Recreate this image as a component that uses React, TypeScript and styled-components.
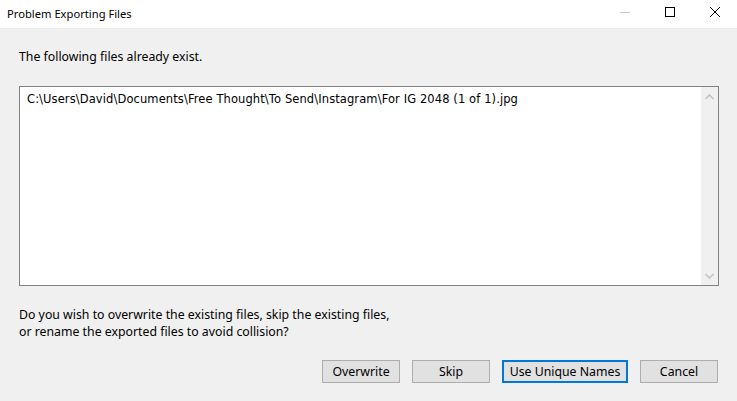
import styled, { createGlobalStyle } from 'styled-components';

const GlobalStyle = createGlobalStyle`
  html, body {
    margin: 0;
    padding: 0;
    background: #f0f0f0;
  }
  body {
    font-family: 'Noto Sans', 'Open Sans', sans-serif;
    font-size: 12.3px;
    color: #000;
  }
`;

const files = [
  'C:\\Users\\David\\Documents\\Free Thought\\To Send\\Instagram\\For IG 2048 (1 of 1).jpg',
];

const App = () => (
  <>
    <GlobalStyle />
    <Window>
      <TitleBar>
        <Title>Problem Exporting Files</Title>
        <Controls>
          <Control aria-label="Minimize">
            <svg width="10" height="10" viewBox="0 0 10 10">
              <path d="M0 5.5h10" stroke="#c8c8c8" strokeWidth="1" />
            </svg>
          </Control>
          <Control aria-label="Maximize">
            <svg width="10" height="10" viewBox="0 0 10 10">
              <rect x="0.5" y="0.5" width="9" height="9" fill="none" stroke="#000" />
            </svg>
          </Control>
          <Control aria-label="Close">
            <svg width="10" height="10" viewBox="0 0 10 10">
              <path d="M0 0L10 10M10 0L0 10" stroke="#000" strokeWidth="1" />
            </svg>
          </Control>
        </Controls>
      </TitleBar>
      <Body>
        <Message>The following files already exist.</Message>
        <ListBox>
          <Items>
            {files.map((f) => (
              <Item key={f}>{f}</Item>
            ))}
          </Items>
          <ScrollBar>
            <svg width="9" height="6" viewBox="0 0 9 6">
              <path d="M0.5 5L4.5 1L8.5 5" fill="none" stroke="#c0c0c0" strokeWidth="1.5" />
            </svg>
            <svg width="9" height="6" viewBox="0 0 9 6">
              <path d="M0.5 1L4.5 5L8.5 1" fill="none" stroke="#c0c0c0" strokeWidth="1.5" />
            </svg>
          </ScrollBar>
        </ListBox>
        <Question>
          Do you wish to overwrite the existing files, skip the existing files,
          <br />
          or rename the exported files to avoid collision?
        </Question>
        <Buttons>
          <Button>Overwrite</Button>
          <Button>Skip</Button>
          <Button $default $width={126}>
            Use Unique Names
          </Button>
          <Button>Cancel</Button>
        </Buttons>
      </Body>
    </Window>
  </>
);

const Window = styled.div`
  width: 737px;
  height: 401px;
  display: flex;
  flex-direction: column;
  background: #f0f0f0;
  overflow: hidden;
`;

const TitleBar = styled.div`
  height: 29px;
  flex: none;
  background: #fff;
  border-bottom: 1px solid #ececec;
  box-sizing: border-box;
  display: flex;
  align-items: center;
  justify-content: space-between;
`;

const Title = styled.div`
  padding-left: 7px;
  font-size: 11.2px;
  margin-top: -2px;
`;

const Controls = styled.div`
  display: flex;
  align-self: stretch;
`;

const Control = styled.div`
  width: 45px;
  display: flex;
  align-items: center;
  justify-content: center;
  margin-top: -4px;
  svg {
    display: block;
  }
`;

const Body = styled.div`
  flex: 1;
  display: flex;
  flex-direction: column;
  padding: 0 19px;
`;

const Message = styled.div`
  margin-top: 19px;
  height: 17px;
  line-height: 17px;
`;

const ListBox = styled.div`
  margin-top: 21px;
  width: 700px;
  height: 200px;
  box-sizing: border-box;
  border: 1px solid #828282;
  background: #fff;
  display: flex;
`;

const Items = styled.div`
  flex: 1;
  padding: 4px 7px;
`;

const Item = styled.div`
  font-family: 'DejaVu Sans', Verdana, sans-serif;
  font-size: 11.5px;
  line-height: 16px;
  letter-spacing: 0.1px;
`;

const ScrollBar = styled.div`
  width: 17px;
  background: #f0f0f0;
  display: flex;
  flex-direction: column;
  justify-content: space-between;
  align-items: center;
  padding: 7px 0 6px;
`;

const Question = styled.div`
  margin-top: 20px;
  line-height: 17px;
`;

const Buttons = styled.div`
  margin-top: 20px;
  display: flex;
  justify-content: flex-end;
  gap: 12px;
  width: 699px;
`;

const Button = styled.button<{ $default?: boolean; $width?: number }>`
  height: 23px;
  width: ${(p) => p.$width ?? 78}px;
  padding: 0;
  box-sizing: border-box;
  background: #e1e1e1;
  border: ${(p) => (p.$default ? '2px solid #0078d7' : '1px solid #adadad')};
  font-family: 'Noto Sans', 'Open Sans', sans-serif;
  font-size: 12.3px;
  color: #000;
  border-radius: 0;
`;

export default App;
